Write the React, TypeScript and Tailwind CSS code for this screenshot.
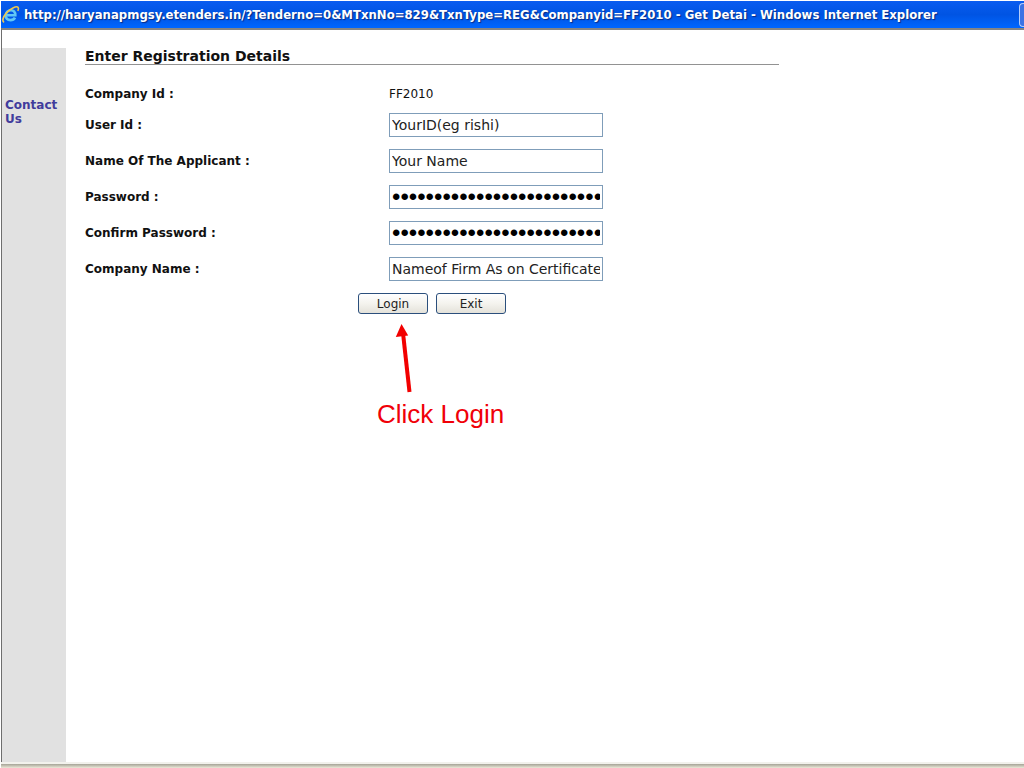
import React from "react";

type Field = { id: string; label: string; type: "text" | "password"; value: string };

const fields: Field[] = [
  { id: "user-id", label: "User Id :", type: "text", value: "YourID(eg rishi)" },
  { id: "applicant", label: "Name Of The Applicant :", type: "text", value: "Your Name" },
  { id: "password", label: "Password :", type: "password", value: "abcdefghijklmnopqrstuvwxyz1234" },
  { id: "confirm", label: "Confirm Password :", type: "password", value: "abcdefghijklmnopqrstuvwxyz1234" },
  { id: "company", label: "Company Name :", type: "text", value: "Nameof Firm As on Certificate" },
];

const inputText = {
  text: "text-[14px] text-[#222]",
  password: "font-['Liberation_Sans',Arial,sans-serif] text-[24px] text-black",
};

function ExplorerIcon() {
  return (
    <svg className="h-5 w-5 shrink-0" viewBox="0 0 20 20" fill="none" aria-hidden="true">
      <path d="M5 10.200H14.300C14.300 6.800 12.500 5.200 10 5.200C7 5.200 4.800 7.400 4.800 10.600C4.800 13.600 6.900 15.100 9.500 15.100C11.600 15.100 13.100 14.300 14 12.600" stroke="#62c8f5" strokeWidth="2.600" />
      <path d="M3.200 17.200C0.800 16.500 1.700 12 5.600 7.700C10 2.900 15.500 0.800 17.100 2.400C17.700 3.100 17.500 4.500 16.800 5.800" stroke="#f1c94c" strokeWidth="1.600" />
    </svg>
  );
}

function TitleBar() {
  return (
    <header className="mt-px flex h-[27px] items-center overflow-hidden bg-linear-to-b from-[#0a5cf0] via-[#0054e3] to-[#0066ff]">
      <ExplorerIcon />
      <h1 className="ml-[3px] flex-1 whitespace-nowrap font-['DejaVu_Sans_Condensed','DejaVu_Sans',sans-serif] text-[13px] leading-5 font-bold text-white [text-shadow:1px_1px_1px_#0a2a80]">
        http://haryanapmgsy.etenders.in/?Tenderno=0&amp;MTxnNo=829&amp;TxnType=REG&amp;Companyid=FF2010 - Get Detai - Windows Internet Explorer
      </h1>
      <button
        type="button"
        aria-label="Minimize"
        className="h-6 w-[5px] shrink-0 rounded-l border border-r-0 border-[#b5cdfa] bg-[#3c73e4]"
      />
    </header>
  );
}

function FormButton({ children }: { children: string }) {
  return (
    <button
      type="button"
      className="h-[21px] w-[70px] rounded-[3px] border border-[#2b4f7c] bg-linear-to-b from-white via-[#f4f3ee] to-[#e4e2da] text-[12px] leading-4 text-[#222]"
    >
      {children}
    </button>
  );
}

function Callout() {
  return (
    <div className="mt-[9px] ml-[292px] text-[#f00008]">
      <svg className="ml-[17px] h-[71px] w-6" viewBox="0 0 24 71" aria-hidden="true">
        <path d="M9 10L15.500 69" stroke="#f20000" strokeWidth="4" />
        <path d="M7.500 1L1.800 14L14.200 12.500Z" fill="#f20000" />
      </svg>
      <p className="mt-[5px] font-['Liberation_Sans',Arial,sans-serif] text-[26px] leading-[30px]">Click Login</p>
    </div>
  );
}

export default function App() {
  return (
    <div className="flex min-h-screen flex-col bg-white pl-px font-['DejaVu_Sans',Verdana,sans-serif] text-[#111]">
      <TitleBar />
      <div className="flex flex-1 border-t-2 border-l border-t-[#858585] border-l-[#6e6e6e]">
        <aside className="mt-[18px] w-16 shrink-0 bg-[#e1e1e1] pt-[50px] pl-[3px]">
          <a href="#contact" className="block text-[12px] leading-[14px] font-bold text-[#413c9c]">
            Contact Us
          </a>
        </aside>
        <main className="min-w-0 flex-1 pt-[19px] pl-[19px]">
          <h2 className="max-w-[694px] border-b border-[#929292] text-[14px] leading-[15px] font-bold">
            Enter Registration Details
          </h2>
          <form className="mt-[21px]">
            <div className="grid grid-cols-[304px_214px] items-center text-[12px] leading-4">
              <span className="font-bold">Company Id :</span>
              <span>FF2010</span>
            </div>
            <div className="mt-[11px] grid grid-cols-[304px_214px] items-center gap-y-3">
              {fields.map((f) => (
                <React.Fragment key={f.id}>
                  <label htmlFor={f.id} className="text-[12px] leading-4 font-bold">
                    {f.label}
                  </label>
                  <div className={inputText[f.type]}>
                    <input
                      id={f.id}
                      type={f.type}
                      defaultValue={f.value}
                      autoComplete="off"
                      className="block h-6 w-full border border-[#7f9db9] bg-white px-0.5 outline-none"
                    />
                  </div>
                </React.Fragment>
              ))}
            </div>
            <div className="mt-3 flex gap-2 pl-[273px]">
              <FormButton>Login</FormButton>
              <FormButton>Exit</FormButton>
            </div>
          </form>
          <Callout />
        </main>
      </div>
      <footer className="h-1.5 border-t-2 border-[#f2f1ec] bg-linear-to-b from-[#a5a397] to-[#ece9d8]" />
    </div>
  );
}
